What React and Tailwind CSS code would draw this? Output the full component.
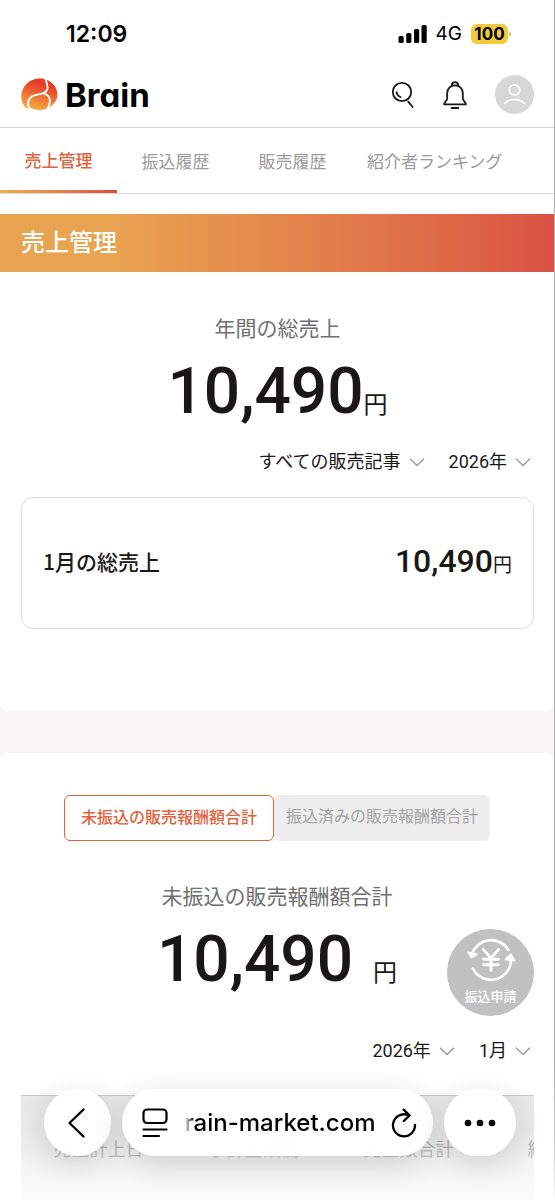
const YEN_FONT = "font-['Roboto','Noto_Sans_CJK_JP',sans-serif]";

function StatusBar() {
  return (
    <div className="flex h-16 items-center justify-between pt-[3px] pr-[42px] pl-[66px] font-['Inter',sans-serif] text-black">
      <time className="text-[23px] leading-8 font-semibold">12:09</time>
      <div className="flex items-center gap-[9px]">
        <svg width="29" height="18" viewBox="0 0 29 18" aria-hidden="true">
          <rect x="0.5" y="11" width="5.2" height="7" rx="1.6" />
          <rect x="8.2" y="8" width="5.2" height="10" rx="1.6" />
          <rect x="16" y="4" width="5.2" height="14" rx="1.6" />
          <rect x="23.5" y="0" width="5.2" height="18" rx="1.6" />
        </svg>
        <span className="text-[19px] leading-8">4G</span>
        <div className="flex items-center">
          <span className="flex h-5 w-[37px] items-center justify-center rounded-md bg-[#f2c93b] text-[17px] leading-5 font-bold">100</span>
          <svg width="4" height="6" viewBox="0 0 4 6" aria-hidden="true">
            <path d="M1 0.5Q3.4 1.2 3.4 3Q3.4 4.8 1 5.5Z" fill="#f2c93b" />
          </svg>
        </div>
      </div>
    </div>
  );
}

function Logo() {
  return (
    <a href="#home" className="flex items-center gap-[7px] text-black">
      <svg width="37" height="34" viewBox="0 0 37 34" aria-hidden="true">
        <defs>
          <linearGradient id="flame" x1="0.65" y1="0" x2="0.35" y2="1">
            <stop offset="0.15" stopColor="#e8392a" />
            <stop offset="0.55" stopColor="#ee7034" />
            <stop offset="1" stopColor="#f3b040" />
          </linearGradient>
        </defs>
        <path
          d="M5.8 30.6C2.4 28 0.3 23.5 0.3 18.4C0.3 8.5 8.5 0.5 18.4 0.5C21 0.5 23.2 0.9 25.2 1.7C32 4 36.4 9.6 36.4 16.6C36.4 21.4 34 25.4 30.2 28C27.4 30.6 23 32 18 32C14.4 32 11.6 31.2 9.4 29.6C8 30 7 30.4 5.8 30.6Z"
          fill="url(#flame)"
        />
        <path
          d="M24.6 -1C24.2 4.2 27.4 6.4 26.4 11C25.2 15 21.4 16 16.4 16.6C10.4 17.6 7 20.8 7.1 25.6C7.2 28.4 8 30.4 9 32.4"
          fill="none"
          stroke="#fff"
          strokeWidth="1.9"
        />
        <path
          d="M22 15.4C27 16.6 29.2 19.8 28.9 23.4C28.7 26.4 27.6 28.8 26.2 31.4"
          fill="none"
          stroke="#fff"
          strokeWidth="1.9"
        />
      </svg>
      <span className="font-['Inter',sans-serif] text-[33px] leading-8 font-bold [font-feature-settings:'cv11']">Brain</span>
    </a>
  );
}

function Header() {
  return (
    <header className="flex h-16 items-center justify-between border-b border-[#d5d5d5] pr-5 pb-0.5 pl-[21px]">
      <Logo />
      <div className="flex items-center text-[#1a1717]">
        <button type="button" aria-label="検索" className="mr-7">
          <svg width="24" height="28" viewBox="0 0 24 28" fill="none" stroke="currentColor" strokeWidth="1.8" strokeLinecap="round">
            <circle cx="11" cy="11" r="9.2" />
            <path d="M5.6 11.2A5.6 5.6 0 0 0 9.6 16M17.2 20.6L21.6 26" />
          </svg>
        </button>
        <button type="button" aria-label="お知らせ" className="mr-7">
          <svg width="24" height="28" viewBox="1 0 24 28" fill="none" stroke="currentColor" strokeWidth="1.8" strokeLinecap="round" strokeLinejoin="round">
            <path d="M13 4.4C8.4 4.4 5.2 7.8 5.2 12V17.4C5.2 19.6 2.2 20.8 2.2 23.4H23.8C23.8 20.8 20.8 19.6 20.8 17.4V12C20.8 7.8 17.6 4.4 13 4.4ZM9.8 4.6C9.8 2.4 11 1.2 13 1.2S16.2 2.4 16.2 4.6M9.6 27H16.4" />
          </svg>
        </button>
        <button type="button" aria-label="アカウント" className="rounded-full bg-[#d7d7d7]">
          <svg width="39" height="39" viewBox="0 0 39 39" fill="none" stroke="#fff" strokeWidth="1.7" strokeLinecap="round">
            <circle cx="19.5" cy="15" r="5.2" />
            <path d="M9.5 28.4C12 25.8 15.4 24.6 19.5 24.6S27 25.8 29.5 28.4" />
          </svg>
        </button>
      </div>
    </header>
  );
}

const TABS = ["売上管理", "振込履歴", "販売履歴", "紹介者ランキング"];

function Tabs() {
  return (
    <nav className="flex h-[66px] border-b border-[#d9d9d9] text-[17px] leading-6 whitespace-nowrap">
      {TABS.map((tab, i) =>
        i === 0 ? (
          <a key={tab} href="#sales" aria-current="page" className="flex min-w-[117px] flex-col justify-end text-center font-medium text-[#dd6440]">
            <span className="mb-[18px]">{tab}</span>
            <span className="h-[3px] bg-linear-to-r from-[#eeb04e] to-[#d94f40]" />
          </a>
        ) : (
          <a key={tab} href={`#tab-${i}`} className="flex min-w-[117px] items-center justify-center px-4 text-[#9b9b9b]">
            {tab}
          </a>
        ),
      )}
    </nav>
  );
}

function Select({ label, options }) {
  return (
    <label className="flex items-center">
      <span className="sr-only">{label}</span>
      <span className="grid items-center">
        <select className={`col-start-1 row-start-1 field-sizing-content appearance-none bg-transparent pr-6 text-lg leading-8 text-[#1a1717] outline-none ${YEN_FONT}`}>
          {options.map((o) => (
            <option key={o}>{o}</option>
          ))}
        </select>
        <svg className="pointer-events-none col-start-1 row-start-1 justify-self-end" width="16" height="9" viewBox="0 0 16 9" fill="none" stroke="#9a9a9a" strokeWidth="1.4" aria-hidden="true">
          <path d="M1 0.8L8 7.6L15 0.8" />
        </svg>
      </span>
    </label>
  );
}

function AnnualSales() {
  return (
    <section className="rounded-b-lg bg-white pb-[82px]">
      <h1 className="flex h-[58px] items-center bg-linear-to-r from-[#e9a451] from-20% to-[#d95244] px-[21px] pb-1 text-2xl font-medium text-white">売上管理</h1>
      <div className="pr-5 pl-[21px]">
        <h2 className="mt-[39px] text-center text-[21px] leading-8 text-[#6f6f6f]">年間の総売上</h2>
        <p className={`flex items-baseline justify-center text-[#1a1717] ${YEN_FONT}`}>
          <span className="text-[64px] leading-[97px] font-medium">10,490</span>
          <span className="text-2xl">円</span>
        </p>
        <div className="mt-1.5 flex justify-end gap-6 pr-[3px]">
          <Select label="記事" options={["すべての販売記事"]} />
          <Select label="年" options={["2026年", "2025年"]} />
        </div>
        <div className="mt-[19px] flex h-[132px] items-center justify-between rounded-xl border border-[#dcdcdc] px-[21px] pb-1 text-[#1a1717]">
          <h3 className="text-[21px] leading-8 font-medium">1月の総売上</h3>
          <p className={`flex items-baseline ${YEN_FONT}`}>
            <span className="text-[32px] leading-10 font-medium">10,490</span>
            <span className="text-[19px]">円</span>
          </p>
        </div>
      </div>
    </section>
  );
}

function TransferButton() {
  return (
    <button type="button" className="absolute top-[176px] right-5 flex size-[87px] flex-col items-center gap-1 rounded-full bg-[#c1c1c1] pt-[7px] text-white">
      <svg width="50" height="46" viewBox="0 0 50 46" fill="none" stroke="#fff" strokeWidth="2.6" strokeLinecap="round" strokeLinejoin="round" aria-hidden="true">
        <path d="M5.9 18.5A20 20 0 0 1 42.3 14M6.9 32.5A20 20 0 0 0 44.9 22.6" />
        <path d="M2 16.4L5.4 21.6L11 18.4ZM39.4 23.4L45 18L48.6 24.8Z" fill="#fff" strokeWidth="1.6" />
        <path d="M17.4 13.6L25 22L32.6 13.6M25 22V34.6M17.6 23.2H32.4M17.6 28.8H32.4" strokeWidth="2.9" />
      </svg>
      <span className="text-[13px] leading-5 font-medium">振込申請</span>
    </button>
  );
}

const COLUMNS = ["売上計上日", "小計金額欄", "売上数合計", "紹介報酬"];

function Rewards() {
  return (
    <section className="relative mt-[42px] rounded-t-lg bg-white">
      <div className="flex justify-center pt-[42px] text-base whitespace-nowrap">
        <button type="button" className="h-[46px] rounded-md border border-[#dd6440] px-4 pb-1 font-medium text-[#dd6440]">未振込の販売報酬額合計</button>
        <button type="button" className="h-[46px] rounded-md bg-[#eeeeee] px-3 pb-1.5 text-[#a3a3a3]">振込済みの販売報酬額合計</button>
      </div>
      <h2 className="mt-[38px] text-center text-[21px] leading-8 text-[#6f6f6f]">未振込の販売報酬額合計</h2>
      <p className={`flex items-baseline justify-center gap-5 text-[#1a1717] ${YEN_FONT}`}>
        <span className="text-[64px] leading-[97px] font-medium">10,490</span>
        <span className="text-2xl">円</span>
      </p>
      <TransferButton />
      <div className="mt-[27px] flex justify-end gap-6 pr-[23px]">
        <Select label="年" options={["2026年", "2025年"]} />
        <Select label="月" options={["1月", "12月"]} />
      </div>
      <div className="mt-7 mr-5 ml-[21px] overflow-hidden">
        <table className="w-[620px] table-fixed border-t border-[#c4c4c4] bg-[#e6e6e6] text-lg text-[#8e8e8e]">
          <thead>
            <tr className="h-[104px]">
              {COLUMNS.map((c) => (
                <th key={c} scope="col" className="font-normal">
                  {c}
                </th>
              ))}
            </tr>
          </thead>
        </table>
      </div>
    </section>
  );
}

function BrowserBar() {
  const pill = "h-[67px] rounded-full bg-white/95 shadow-[0_8px_32px_rgba(0,0,0,0.14)] backdrop-blur-xs";
  return (
    <div className="fixed inset-x-0 bottom-0 bg-linear-to-b from-transparent via-white/20 to-white/90 pt-6 pr-[39px] pb-11 pl-11 text-black">
      <div className="flex gap-[11px]">
        <button type="button" aria-label="戻る" className={`flex w-[67px] items-center justify-center ${pill}`}>
          <svg className="mr-1" width="18" height="30" viewBox="0 0 18 30" fill="none" stroke="currentColor" strokeWidth="2.3" strokeLinecap="round" strokeLinejoin="round">
            <path d="M16.5 1.5L2.5 15L16.5 28.5" />
          </svg>
        </button>
        <div className={`flex min-w-0 flex-1 items-center justify-between pr-4 pl-5 ${pill}`}>
          <button type="button" aria-label="ページ設定">
            <svg width="26" height="30" viewBox="0 0 26 30" fill="none" stroke="currentColor" strokeWidth="2.2" strokeLinecap="round">
              <rect x="1.5" y="1.5" width="23" height="13.5" rx="3.5" />
              <path d="M1.5 21.5H24.5M1.5 28H17" />
            </svg>
          </button>
          <div className="flex w-[192px] justify-end overflow-hidden font-['Inter',sans-serif] text-2xl leading-8 font-medium whitespace-nowrap [mask-image:linear-gradient(to_right,transparent,black_10px)]">
            brain-market.com
          </div>
          <button type="button" aria-label="再読み込み">
            <svg width="26" height="30" viewBox="0 0 26 30" fill="none" stroke="currentColor" strokeWidth="2.3" strokeLinecap="round" strokeLinejoin="round">
              <path d="M24 17A11 11 0 1 1 18.2 7.6M12.6 1.6L18.6 7.4L12.8 13" />
            </svg>
          </button>
        </div>
        <button type="button" aria-label="メニュー" className={`flex w-[72px] items-center justify-center ${pill}`}>
          <svg width="32" height="8" viewBox="0 0 32 8" fill="currentColor">
            <circle cx="4" cy="4" r="3.3" />
            <circle cx="16" cy="4" r="3.3" />
            <circle cx="28" cy="4" r="3.3" />
          </svg>
        </button>
      </div>
    </div>
  );
}

export default function App() {
  return (
    <div className="overflow-hidden border-r border-[#b5b5b5] bg-[#f9f5f4] font-['Noto_Sans_CJK_JP',sans-serif]">
      <div className="bg-white pb-5">
        <StatusBar />
        <Header />
        <Tabs />
      </div>
      <main>
        <AnnualSales />
        <Rewards />
      </main>
      <BrowserBar />
    </div>
  );
}
